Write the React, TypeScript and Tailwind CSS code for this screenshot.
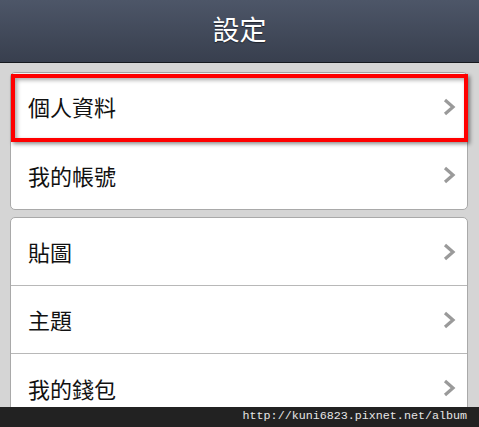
import React from "react";

const groups = [
  ["個人資料", "我的帳號"],
  ["貼圖", "主題", "我的錢包"],
];

const Chevron = () => (
  <svg width="13" height="18" viewBox="0 0 13 18" className="shrink-0">
    <path d="M2 2 L10 9 L2 16" fill="none" stroke="#9a9a9a" strokeWidth="3.2" />
  </svg>
);

const Row = ({ label, last }: { label: string; last: boolean }) => (
  <div
    className={`h-[68px] flex items-center justify-between pl-[17px] pr-[11px] ${
      last ? "" : "border-b border-[#b8b8b8]"
    }`}
  >
    <span className="text-[22px] text-[#111]">{label}</span>
    <Chevron />
  </div>
);

export default function App() {
  return (
    <div
      className="relative w-[479px] h-[427px] overflow-hidden bg-[#d5d5d5]"
      style={{ fontFamily: '"Noto Sans CJK TC", "Noto Sans", sans-serif' }}
    >
      <header className="h-[63px] flex items-center justify-center bg-gradient-to-b from-[#4d5668] to-[#383f4e] border-b border-[#16191e]">
        <h1 className="text-[27px] text-white [text-shadow:0_1px_1px_rgba(0,0,0,0.5)] -mt-[3px]">
          設定
        </h1>
      </header>

      <div className="flex flex-col gap-[7px] pt-[9px] pl-[10px] w-[468px]">
        {groups.map((items, gi) => (
          <div
            key={gi}
            className="bg-white border border-[#a9a9a9] rounded-[5px] overflow-hidden"
          >
            {items.map((label, i) => (
              <Row key={label} label={label} last={i === items.length - 1} />
            ))}
          </div>
        ))}
      </div>

      {/* red highlight around the first row */}
      <div className="absolute left-[11px] top-[74px] w-[457px] h-[68px] border-[4px] border-[#ff0000] shadow-[2px_2px_4px_rgba(0,0,0,0.45),inset_2px_2px_4px_rgba(0,0,0,0.35)]" />

      <div className="absolute left-0 bottom-0 w-full h-[20px] bg-[#222222] flex items-center justify-end pr-[12px]">
        <span
          className="text-[11.7px] text-[#e6e6e6]"
          style={{ fontFamily: '"Liberation Mono", monospace' }}
        >
          http://kuni6823.pixnet.net/album
        </span>
      </div>
    </div>
  );
}
